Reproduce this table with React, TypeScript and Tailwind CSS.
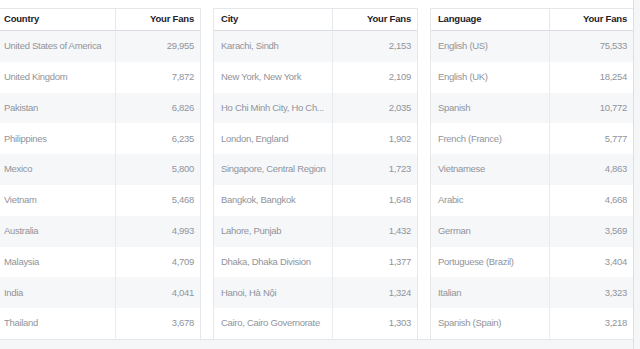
import React from 'react';

type Row = [string, string];

const TABLES: { title: string; rows: Row[] }[] = [
  {
    title: 'Country',
    rows: [
      ['United States of America', '29,955'],
      ['United Kingdom', '7,872'],
      ['Pakistan', '6,826'],
      ['Philippines', '6,235'],
      ['Mexico', '5,800'],
      ['Vietnam', '5,468'],
      ['Australia', '4,993'],
      ['Malaysia', '4,709'],
      ['India', '4,041'],
      ['Thailand', '3,678'],
    ],
  },
  {
    title: 'City',
    rows: [
      ['Karachi, Sindh', '2,153'],
      ['New York, New York', '2,109'],
      ['Ho Chi Minh City, Ho Ch...', '2,035'],
      ['London, England', '1,902'],
      ['Singapore, Central Region', '1,723'],
      ['Bangkok, Bangkok', '1,648'],
      ['Lahore, Punjab', '1,432'],
      ['Dhaka, Dhaka Division', '1,377'],
      ['Hanoi, Hà Nội', '1,324'],
      ['Cairo, Cairo Governorate', '1,303'],
    ],
  },
  {
    title: 'Language',
    rows: [
      ['English (US)', '75,533'],
      ['English (UK)', '18,254'],
      ['Spanish', '10,772'],
      ['French (France)', '5,777'],
      ['Vietnamese', '4,863'],
      ['Arabic', '4,668'],
      ['German', '3,569'],
      ['Portuguese (Brazil)', '3,404'],
      ['Italian', '3,323'],
      ['Spanish (Spain)', '3,218'],
    ],
  },
];

const FansTable: React.FC<{ title: string; rows: Row[]; className: string }> = ({ title, rows, className }) => (
  <div className={`border-x border-t border-[#e5e7ea] bg-white ${className}`}>
    <div className="flex h-[22px] items-center border-b border-[#d9dce0] text-[9.5px] font-bold tracking-[-0.2px] text-[#1d2129]">
      <div className="flex h-full w-[119px] items-center border-r border-[#e5e7ea] pl-[7px]">{title}</div>
      <div className="flex-1 pr-[6px] text-right">Your Fans</div>
    </div>
    {rows.map(([name, value], i) => (
      <div
        key={name}
        className={`flex h-[30.8px] items-center text-[9.5px] tracking-[-0.3px] text-[#90949c] ${i % 2 === 0 ? 'bg-[#f6f7f9]' : 'bg-white'}`}
      >
        <div className="flex h-full w-[119px] items-center whitespace-nowrap border-r border-[#e9ebee] pl-[7px]">{name}</div>
        <div className="flex-1 pr-[6px] text-right">{value}</div>
      </div>
    ))}
  </div>
);

export default function App() {
  return (
    <div className="flex h-[349px] w-[640px] overflow-hidden bg-[#f5f6f7] font-['Liberation_Sans',Arial,sans-serif]">
      <div className="ml-[-4px] flex w-[638px] flex-col border-r border-[#dddfe2]">
        <div className="flex gap-[12px] bg-white pt-[8px]">
          <FansTable title={TABLES[0].title} rows={TABLES[0].rows} className="w-[205px]" />
          <FansTable title={TABLES[1].title} rows={TABLES[1].rows} className="w-[205px]" />
          <FansTable title={TABLES[2].title} rows={TABLES[2].rows} className="flex-1 border-r-0" />
        </div>
        <div className="flex-1 border-t border-[#e5e7ea] bg-[#f5f6f7]" />
      </div>
    </div>
  );
}
